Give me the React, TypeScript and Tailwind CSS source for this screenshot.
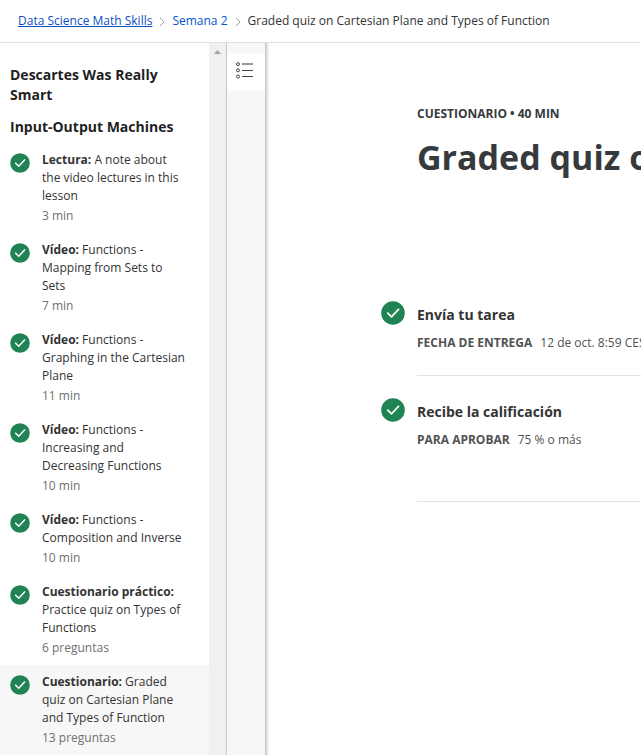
type Item = { kind: string; lines: string[]; meta: string; active?: boolean };

const items: Item[] = [
  { kind: "Lectura:", lines: [" A note about", "the video lectures in this", "lesson"], meta: "3 min" },
  { kind: "Vídeo:", lines: [" Functions -", "Mapping from Sets to", "Sets"], meta: "7 min" },
  { kind: "Vídeo:", lines: [" Functions -", "Graphing in the Cartesian", "Plane"], meta: "11 min" },
  { kind: "Vídeo:", lines: [" Functions -", "Increasing and", "Decreasing Functions"], meta: "10 min" },
  { kind: "Vídeo:", lines: [" Functions -", "Composition and Inverse"], meta: "10 min" },
  { kind: "Cuestionario práctico:", lines: ["", "Practice quiz on Types of", "Functions"], meta: "6 preguntas" },
  { kind: "Cuestionario:", lines: [" Graded", "quiz on Cartesian Plane", "and Types of Function"], meta: "13 preguntas", active: true },
];

function Check({ size }: { size: number }) {
  return (
    <svg width={size} height={size} viewBox="0 0 24 24" className="block shrink-0">
      <circle cx="12" cy="12" r="11.8" fill="#1f8354" />
      <path d="M6.2 11.6l4.3 4.2L18 7.9" fill="none" stroke="#fff" strokeWidth="1.8" />
    </svg>
  );
}

function Chevron() {
  return (
    <svg width="6" height="10" viewBox="0 0 6 10" className="mt-px block shrink-0">
      <path d="M1 1l4 4-4 4" fill="none" stroke="#a0a0a0" strokeWidth="1" />
    </svg>
  );
}

function LessonItem({ item }: { item: Item }) {
  return (
    <li className={`flex gap-3 pl-[10px] pt-2 pb-2 ${item.active ? "bg-[#f7f7f7]" : ""}`}>
      <div className="pt-[2px]"><Check size={20} /></div>
      <div className="text-xs leading-[18px] whitespace-nowrap text-[#333]">
        {item.lines.map((line, i) => (
          <div key={i}>
            {i === 0 && <b className="font-bold text-[#333]">{item.kind}</b>}
            {line}
          </div>
        ))}
        <div className="mt-[2px] text-[#707070]">{item.meta}</div>
      </div>
    </li>
  );
}

export default function App() {
  return (
    <div className="flex h-[755px] w-[641px] flex-col overflow-hidden bg-white font-['Open_Sans',sans-serif] text-[#1f1f1f]">
      <header className="flex h-[43px] shrink-0 items-center border-b border-[#e1e1e1] pl-[18px] text-xs whitespace-nowrap">
        <a className="text-[#0f4fc0] underline">Data Science Math Skills</a>
        <span className="px-[7px]"><Chevron /></span>
        <a className="text-[#0056d2]">Semana 2</a>
        <span className="px-[7px]"><Chevron /></span>
        <span className="w-[301px] overflow-hidden text-[#333]">Graded quiz on Cartesian Plane and Types of Function</span>
      </header>
      <div className="flex min-h-0 flex-1">
        <aside className="w-[209px] shrink-0 pt-[22px]">
          <h2 className="pl-[10px] text-sm leading-5 font-bold">Descartes Was Really<br />Smart</h2>
          <h2 className="mt-3 pl-[10px] text-sm leading-5 font-bold">Input-Output Machines</h2>
          <ul className="mt-[6px]">
            {items.map((item, i) => <LessonItem key={i} item={item} />)}
          </ul>
        </aside>
        <div className="flex w-[17px] shrink-0 justify-center bg-[#f0f0f0] pt-[7px]">
          <svg width="7" height="4" viewBox="0 0 7 4"><path d="M0 4L3.5 0 7 4z" fill="#a3a3a3" /></svg>
        </div>
        <div className="w-[39px] shrink-0 border-l border-[#c8c8c8] bg-[#f7f7f7] pt-[10px]">
          <button className="flex h-[38px] w-full items-start bg-white pt-[9px] pl-[9px]">
            <svg width="18" height="18" viewBox="0 0 18 18" fill="none" stroke="#444">
              <circle cx="2" cy="2.1" r="1.5" /><circle cx="2" cy="8.3" r="1.5" /><circle cx="2" cy="14.5" r="1.5" />
              <path d="M6 2h11" stroke="#999" strokeWidth="2" />
              <path d="M6 8.5h11M6 14.5h11" />
            </svg>
          </button>
        </div>
        <div className="w-1 shrink-0 bg-linear-to-r from-[#c2c2c2] to-white" />
        <main className="min-w-0 flex-1 overflow-hidden pl-[112px] whitespace-nowrap">
          <div className="pl-9">
            <p className="pt-[62px] text-xs leading-[18px] font-bold text-[#373a3c]">CUESTIONARIO • 40 MIN</p>
            <h1 className="mt-3 text-[34px] leading-[44px] font-bold text-[#373a3c]">Graded quiz on Cartesian Plane</h1>
          </div>
          <section className="mt-[122px] flex gap-3">
            <Check size={24} />
            <div className="flex-1 border-b border-[#e1e1e1] pb-[22px]">
              <h3 className="pt-1 text-sm leading-5 font-bold text-[#333]">Envía tu tarea</h3>
              <p className="mt-2 text-xs leading-5 text-[#525252]"><b className="mr-2 font-bold">FECHA DE ENTREGA</b>12 de oct. 8:59 CEST</p>
            </div>
          </section>
          <section className="mt-[22px] flex gap-3">
            <Check size={24} />
            <div className="flex-1 border-b border-[#e1e1e1] pb-[51px]">
              <h3 className="pt-1 text-sm leading-5 font-bold text-[#333]">Recibe la calificación</h3>
              <p className="mt-2 text-xs leading-5 text-[#525252]"><b className="mr-2 font-bold">PARA APROBAR</b>75 % o más</p>
            </div>
          </section>
        </main>
      </div>
    </div>
  );
}
